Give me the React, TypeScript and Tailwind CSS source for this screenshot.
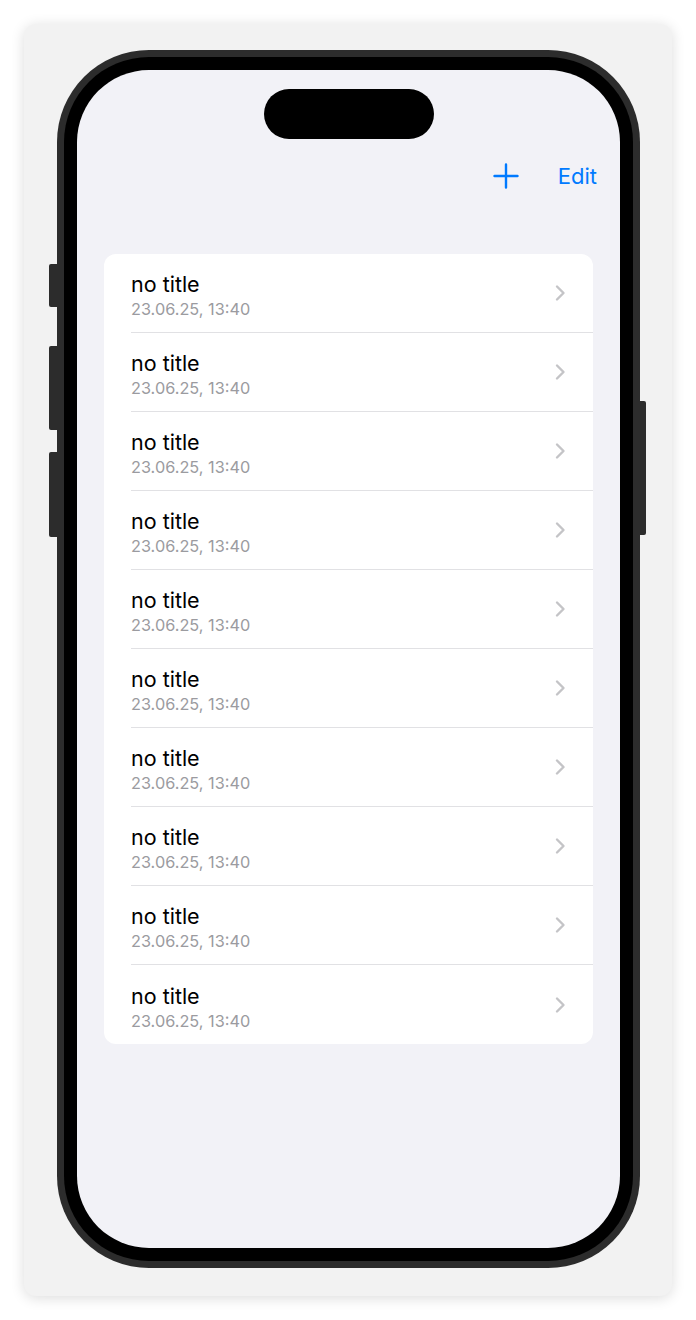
const NOTES = Array.from({ length: 10 }).map((_, i) => ({
  id: i,
  title: "no title",
  date: "23.06.25, 13:40",
}));

function Chevron() {
  return (
    <svg width="12" height="18" viewBox="0 0 12 18" fill="none">
      <path d="M3 2.5 L9.5 9 L3 15.5" stroke="#c4c4c7" strokeWidth="2.4" strokeLinecap="round" strokeLinejoin="round" />
    </svg>
  );
}

function PlusIcon() {
  return (
    <svg width="26" height="26" viewBox="0 0 26 26" fill="none">
      <path d="M13 1.5 V24.5 M1.5 13 H24.5" stroke="#007aff" strokeWidth="2.4" strokeLinecap="round" />
    </svg>
  );
}

export default function App() {
  return (
    <div className="min-h-screen bg-white p-[24px]" style={{ fontFamily: "Inter, 'Noto Sans', sans-serif" }}>
      <div className="w-[648px] h-[1272px] bg-[#f2f2f2] rounded-[12px] shadow-[0_2px_14px_rgba(0,0,0,0.14)] pt-[26px] pl-[33px]">
        {/* phone */}
        <div className="relative w-[583px] h-[1218px] rounded-[92px] bg-[#2c2c2c] p-[7px]">
          {/* side buttons */}
          <div className="absolute left-[-8px] top-[214px] w-[8px] h-[43px] bg-[#2c2c2c] rounded-l-[2px]" />
          <div className="absolute left-[-8px] top-[296px] w-[8px] h-[84px] bg-[#2c2c2c] rounded-l-[2px]" />
          <div className="absolute left-[-8px] top-[402px] w-[8px] h-[85px] bg-[#2c2c2c] rounded-l-[2px]" />
          <div className="absolute right-[-6px] top-[351px] w-[6px] h-[134px] bg-[#2c2c2c] rounded-r-[2px]" />

          <div className="h-full rounded-[85px] bg-black p-[13px]">
            <div className="h-full rounded-[72px] bg-[#f2f2f7] flex flex-col overflow-hidden">
              {/* dynamic island */}
              <div className="mt-[19px] mx-auto w-[170px] h-[50px] rounded-full bg-black" />

              {/* nav bar */}
              <div className="mt-[15px] h-[44px] flex items-center justify-end pr-[23px] gap-[39px]">
                <PlusIcon />
                <span className="text-[22px] text-[#007aff]">Edit</span>
              </div>

              {/* list */}
              <div className="mt-[56px] mx-[27px] bg-white rounded-[12px] overflow-hidden">
                {NOTES.map((n, i) => (
                  <div key={n.id} className="h-[79px] pl-[27px] flex">
                    <div
                      className={
                        "flex-1 flex items-center pr-[27px] " +
                        (i < NOTES.length - 1 ? "border-b border-[#e1e1e4]" : "")
                      }
                    >
                      <div className="flex-1 flex flex-col gap-[2px] pt-[4px]">
                        <span className="text-[21.5px] leading-[26px] text-black">{n.title}</span>
                        <span className="text-[16.3px] leading-[20px] text-[#9b9ba0]">{n.date}</span>
                      </div>
                      <Chevron />
                    </div>
                  </div>
                ))}
              </div>
            </div>
          </div>
        </div>
      </div>
    </div>
  );
}
